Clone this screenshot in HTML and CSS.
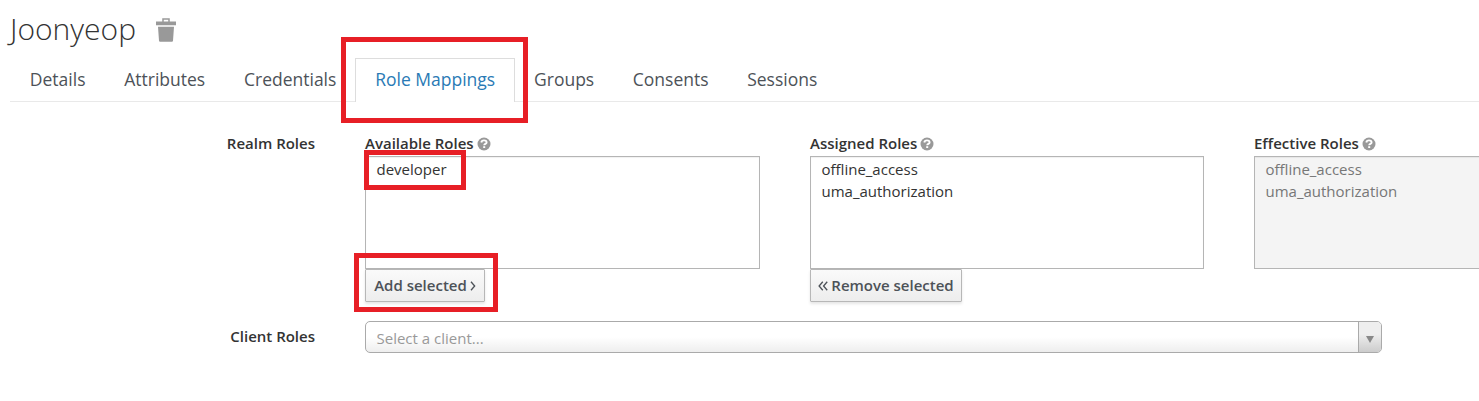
FILE: index.html
```html
<!DOCTYPE html>
<html lang="en">
<head>
<meta charset="utf-8">
<title>Joonyeop - Role Mappings</title>
<link rel="stylesheet" href="styles.css">
</head>
<body>
<svg class="symbols" width="0" height="0" aria-hidden="true">
  <symbol id="help" viewBox="0 0 14 14">
    <circle cx="7" cy="7" r="6.500" fill="#999"/>
    <path d="M4.300 5.500C4.500 4 5.500 3.400 7 3.400c1.600 0 2.600.8 2.600 2 0 1.600-2.400 1.400-2.400 2.900" fill="none" stroke="#fff" stroke-width="1.900"/>
    <path d="M6.200 9.200h2v1.800h-2z" fill="#fff"/>
  </symbol>
</svg>
<main class="page">
  <h1 class="title">
    <span>Joonyeop</span>
    <svg class="trash" viewBox="0 0 20 24" aria-label="Delete">
      <path d="M7 4V1h6v3" fill="none" stroke="#999" stroke-width="1.500"/>
      <path d="M0 3.500h20v3.700H0zM2 8.700h16l-1 14q-.1 1-1.100 1H4.100q-1 0-1.100-1z" fill="#999"/>
    </svg>
  </h1>
  <nav class="tabs">
    <a class="tab">Details</a>
    <a class="tab">Attributes</a>
    <a class="tab">Credentials</a>
    <a class="tab active">Role Mappings</a>
    <a class="tab">Groups</a>
    <a class="tab">Consents</a>
    <a class="tab">Sessions</a>
  </nav>
  <section class="roles">
    <div class="row-label">Realm Roles</div>
    <div class="column">
      <div class="label">Available Roles <svg class="help"><use href="#help"/></svg></div>
      <div class="list"><div class="option">developer</div></div>
      <button class="button add">Add selected <svg class="chevron" viewBox="0 0 5 9"><path d="M.7.700l3.300 3.800L.7 8.300"/></svg></button>
    </div>
    <div class="column">
      <div class="label">Assigned Roles <svg class="help"><use href="#help"/></svg></div>
      <div class="list"><div class="option">offline_access</div><div class="option">uma_authorization</div></div>
      <button class="button remove"><svg class="chevron double" viewBox="0 0 9 9"><path d="M4.300.7L1 4.500l3.300 3.800M8.300.7L5 4.500l3.300 3.800"/></svg> Remove selected</button>
    </div>
    <div class="column">
      <div class="label">Effective Roles <svg class="help"><use href="#help"/></svg></div>
      <div class="list disabled"><div class="option">offline_access</div><div class="option">uma_authorization</div></div>
    </div>
  </section>
  <section class="client">
    <div class="row-label">Client Roles</div>
    <div class="select"><span class="placeholder">Select a client...</span><span class="arrow"><svg viewBox="0 0 8 7"><path d="M0 0h8L4 7z" fill="#888"/></svg></span></div>
  </section>
  <div class="mark mark-tab"></div>
  <div class="mark mark-role"></div>
  <div class="mark mark-add"></div>
</main>
</body>
</html>
```
FILE: styles.css
```css
* { box-sizing: border-box; }
body { margin: 0; background: #fff; color: #333; font: 15px/22px "Open Sans", sans-serif; }
.symbols { display: block; }
.page { position: relative; height: 401px; overflow: hidden; white-space: nowrap; }
.title { display: flex; align-items: flex-start; gap: 20px; height: 58px; margin: 0; padding: 8px 0 0 10px; font-size: 30px; line-height: 41px; font-weight: 300; }
.trash { width: 20px; height: 24px; margin-top: 10px; overflow: visible; }
.tabs { display: flex; height: 44px; margin-left: 10px; border-bottom: 1px solid #e9e9e9; font-size: 17.5px; line-height: 24px; color: #4d5258; }
.tab { height: 44px; padding: 9px 18.900px 0 19.850px; }
.tab.active { padding: 8px 18.900px 0; border: 1px solid #ddd; border-bottom: 0; background: #fff; color: #2a7ab5; }
.tab.active ~ .tab { padding-left: 19px; padding-right: 19.600px; }
.roles { display: grid; grid-template-columns: 315px 395px 394px 394px; column-gap: 50px; height: 219px; padding-top: 30px; }
.row-label { text-align: right; font-weight: 600; }
.label { display: flex; align-items: center; gap: 3px; height: 24px; padding-bottom: 2px; font-weight: 600; }
.help { width: 14px; height: 14px; margin-top: 1px; }
.list { height: 113px; padding: 1px 10.500px; border: 1px solid #b5b5b5; background: #fff; box-shadow: inset 0 1px 1px rgba(0,0,0,.06); }
.list.disabled { background: #f4f4f4; color: #777; }
.option { height: 22px; }
.button { display: flex; align-items: center; justify-content: center; gap: 3px; height: 33px; padding: 0 0 2px; border: 1px solid #b7b7b7; border-radius: 1px; background: linear-gradient(#fafafa, #ededed); box-shadow: 0 2px 3px rgba(3,3,3,.1); color: #4d5258; font: 600 15px/22px "Open Sans", sans-serif; }
.add { width: 120px; }
.remove { width: 152px; }
.chevron { width: 6px; height: 10px; margin-top: 3px; fill: none; stroke: #4d5258; stroke-width: 1.2; }
.chevron.double { width: 10px; }
.client { display: grid; grid-template-columns: 315px 1017px; column-gap: 50px; }
.client .row-label { padding-top: 4px; }
.select { display: flex; justify-content: space-between; height: 32px; border: 1px solid #aaa; border-radius: 5px; background: linear-gradient(#fff 50%, #eee); overflow: hidden; }
.placeholder { padding: 5px 10.500px; color: #999; }
.arrow { display: flex; align-items: center; justify-content: center; width: 23px; border-left: 1px solid #aaa; background: linear-gradient(#eee 40%, #ccc); }
.arrow svg { width: 8px; height: 7px; margin-top: 5px; }
.mark { position: absolute; border: 5px solid #e71f26; }
.mark-tab { left: 341px; top: 37px; width: 187px; height: 86px; }
.mark-role { left: 364px; top: 150px; width: 102px; height: 40px; }
.mark-add { left: 354px; top: 253px; width: 144px; height: 59px; }
```
